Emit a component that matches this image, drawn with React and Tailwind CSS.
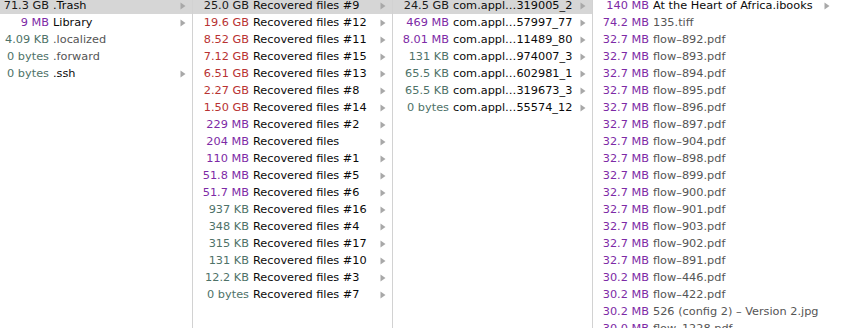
import React from "react";

const sizeColor = (s, sel) => {
  if (sel) return "text-[#1a1a1a]";
  if (s.endsWith("GB")) return "text-[#b83232]";
  if (s.endsWith("MB")) return "text-[#7d2aa6]";
  return "text-[#4e7268]";
};

function Arrow() {
  return (
    <svg width="6" height="8" viewBox="0 0 6 8" className="shrink-0">
      <path d="M0.5 0.5 L5.5 4 L0.5 7.5 Z" fill="#a8a8a8" />
    </svg>
  );
}

function Row({ size, name, folder, sel, sizeW, arrowMr }) {
  return (
    <div
      className={
        "flex items-center h-[17px] whitespace-nowrap " +
        (sel ? "bg-[#d6d6d6]" : "")
      }
    >
      <span
        className={"shrink-0 text-right " + sizeColor(size, sel)}
        style={{ width: sizeW }}
      >
        {size}
      </span>
      <span
        className={
          "ml-[4px] flex-1 overflow-hidden " +
          (folder ? "text-[#0a0a0a]" : "text-[#555555]")
        }
      >
        {name}
      </span>
      <span
        className={"w-[6px] flex items-center justify-center " + arrowMr}
      >
        {folder ? <Arrow /> : null}
      </span>
    </div>
  );
}

function Column({ rows, width, sizeW, last }) {
  return (
    <div
      className={
        "flex flex-col shrink-0 mt-[-3px] " +
        (last ? "flex-1" : "border-r border-[#d2d2d2]")
      }
      style={last ? undefined : { width }}
    >
      {rows.map((r, i) => (
        <Row
          key={i}
          {...r}
          sizeW={sizeW}
          arrowMr={last ? "mr-[11px]" : "mr-[6px]"}
        />
      ))}
    </div>
  );
}

const col1 = [
  { size: "71.3 GB", name: ".Trash", folder: true, sel: true },
  { size: "9 MB", name: "Library", folder: true },
  { size: "4.09 KB", name: ".localized" },
  { size: "0 bytes", name: ".forward" },
  { size: "0 bytes", name: ".ssh", folder: true },
];

const col2 = [
  ["25.0 GB", "#9"],
  ["19.6 GB", "#12"],
  ["8.52 GB", "#11"],
  ["7.12 GB", "#15"],
  ["6.51 GB", "#13"],
  ["2.27 GB", "#8"],
  ["1.50 GB", "#14"],
  ["229 MB", "#2"],
  ["204 MB", ""],
  ["110 MB", "#1"],
  ["51.8 MB", "#5"],
  ["51.7 MB", "#6"],
  ["937 KB", "#16"],
  ["348 KB", "#4"],
  ["315 KB", "#17"],
  ["131 KB", "#10"],
  ["12.2 KB", "#3"],
  ["0 bytes", "#7"],
].map(([s, n], i) => ({
  size: s,
  name: n ? "Recovered files " + n : "Recovered files",
  folder: true,
  sel: i === 0,
}));

const col3 = [
  ["24.5 GB", "319005_2"],
  ["469 MB", "57997_77"],
  ["8.01 MB", "11489_80"],
  ["131 KB", "974007_3"],
  ["65.5 KB", "602981_1"],
  ["65.5 KB", "319673_3"],
  ["0 bytes", "55574_12"],
].map(([s, n], i) => ({
  size: s,
  name: "com.appl\u2026" + n,
  folder: true,
  sel: i === 0,
}));

const col4 = [
  { size: "140 MB", name: "At the Heart of Africa.ibooks", folder: true },
  { size: "74.2 MB", name: "135.tiff" },
  ...["892", "893", "894", "895", "896", "897", "904", "898", "899", "900", "901", "903", "902", "891"].map(
    (n) => ({ size: "32.7 MB", name: "flow\u2013" + n + ".pdf" })
  ),
  { size: "30.2 MB", name: "flow\u2013446.pdf" },
  { size: "30.2 MB", name: "flow\u2013422.pdf" },
  { size: "30.2 MB", name: "526 (config 2) \u2013 Version 2.jpg" },
  { size: "30.0 MB", name: "flow\u20131228.pdf" },
];

export default function App() {
  return (
    <div
      className="w-[841px] h-[328px] overflow-hidden bg-white flex text-[11.3px] leading-[17px]"
      style={{ fontFamily: '"DejaVu Sans", "Liberation Sans", sans-serif' }}
    >
      <Column rows={col1} width={193} sizeW={49} />
      <Column rows={col2} width={200} sizeW={56} />
      <Column rows={col3} width={200} sizeW={56} />
      <Column rows={col4} sizeW={56} last />
    </div>
  );
}
